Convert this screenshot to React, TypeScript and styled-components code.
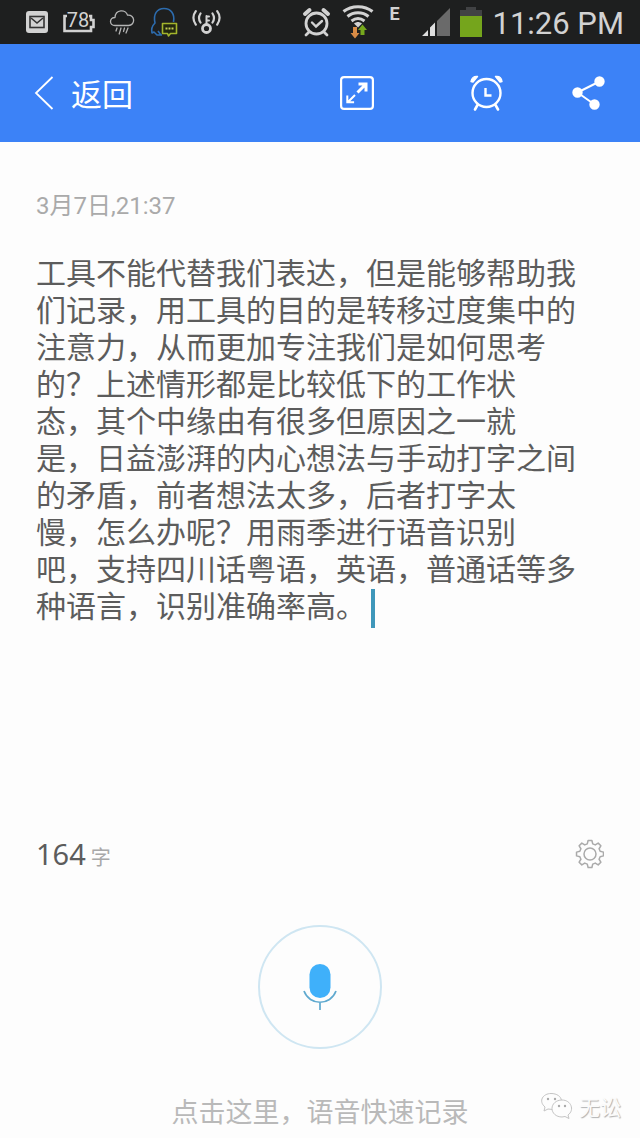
import React, { useState } from "react";
import styled, { createGlobalStyle } from "styled-components";

const latin = `Roboto, "Noto Sans CJK SC", sans-serif`;
const cjk = `"Noto Sans CJK SC", "Noto Sans", sans-serif`;

const GlobalStyle = createGlobalStyle`
  * { box-sizing: border-box; }
  body { margin: 0; background: #fdfdfd; font-family: ${cjk}; }
  button { padding: 0; border: 0; background: none; font: inherit; color: inherit; cursor: pointer; }
  svg { display: block; flex: none; }
`;

const Page = styled.div`
  position: relative;
  display: flex;
  flex-direction: column;
  min-height: 100vh;
`;

const StatusBar = styled.div`
  display: flex;
  justify-content: space-between;
  height: 44px;
  padding: 0 16px 0 26px;
  background: #1e1f1f;
  color: #d2d2d2;
`;

const StatusGroup = styled.div<{ $gap: number }>`
  display: flex;
  align-items: center;
  gap: ${(p) => p.$gap}px;
`;

const NetworkType = styled.span`
  width: 28px;
  padding: 0 8px 16px 5px;
  font: 700 18px/20px ${latin};
`;

const Clock = styled.span`
  font: 400 31px/44px ${latin};
  padding-top: 3px;
  white-space: nowrap;
`;

const Header = styled.header`
  display: flex;
  align-items: center;
  justify-content: space-between;
  height: 98px;
  padding: 0 34px;
  background: #3c82f7;
  color: #fff;
`;

const BackButton = styled.button`
  display: flex;
  align-items: center;
  gap: 16px;
  && {
    font: 400 31px/44px ${cjk};
  }
`;

const Actions = styled.div`
  display: flex;
  gap: 68px;
`;

const ActionButton = styled.button<{ $after?: number }>`
  margin-right: ${(p) => p.$after ?? 0}px;
`;

const Main = styled.main`
  display: flex;
  flex: 1;
  flex-direction: column;
  padding: 50px 36px 9px;
`;

const NoteDate = styled.time`
  color: #aaa;
  font: 400 24px/28px ${latin};
`;

const NoteField = styled.div`
  position: relative;
  display: flex;
  flex: 1;
  margin-top: 33px;
`;

const NoteText = styled.textarea`
  flex: 1;
  min-height: 380px;
  padding: 0;
  border: 0;
  outline: 0;
  resize: none;
  overflow: hidden;
  background: transparent;
  color: #5c5c5c;
  caret-color: #3f97ba;
  font: 400 30px/37px ${cjk};
`;

const Caret = styled.span`
  position: absolute;
  top: 336px;
  left: 335px;
  width: 4px;
  height: 39px;
  background: #3f97ba;
  pointer-events: none;
  ${NoteText}:focus + & {
    display: none;
  }
`;

const CountRow = styled.div`
  display: flex;
  align-items: center;
  justify-content: space-between;
  height: 36px;
`;

const Count = styled.p`
  margin: 0;
  color: #5c5c5c;
  font: 400 29px/36px "Noto Sans", "Noto Sans CJK SC", sans-serif;
`;

const CountUnit = styled.span`
  margin-left: 5px;
  color: #a8a8a8;
  font-size: 20px;
`;

const SettingsButton = styled.button`
  padding-bottom: 4px;
`;

const Recorder = styled.div`
  display: flex;
  flex-direction: column;
  align-items: center;
  gap: 44px;
  margin-top: 51px;
`;

const MicButton = styled.button`
  display: grid;
  place-items: center;
  width: 124px;
  height: 124px;
  && {
    border: 2px solid #cfe6f2;
  }
  border-radius: 50%;
`;

const Hint = styled.p`
  margin: 0;
  color: #b9b9b9;
  font: 400 27px/36px ${cjk};
`;

const Watermark = styled.div`
  position: absolute;
  right: 19px;
  bottom: 18px;
  display: flex;
  align-items: center;
  gap: 5px;
  color: #fbfbfb;
  font: 400 21px/28px ${cjk};
  text-shadow: 1px 1px 1px #b0b0b0;
`;

const MailIcon = () => (
  <svg width="22" height="22" viewBox="0 0 22 22" fill="none">
    <rect width="22" height="22" rx="3" fill="#d2d2d2" />
    <rect x="4" y="5.5" width="14" height="11" stroke="#333" strokeWidth="1.6" />
    <path d="m5 7 6 5 6-5" stroke="#333" strokeWidth="1.6" />
  </svg>
);

const BatteryLevelIcon = () => (
  <svg width="33" height="44" viewBox="0 0 33 44" fill="none">
    <path d="M5 16H2.500v15H29v-4h2.500v-7H29v-4h-2" stroke="#d2d2d2" strokeWidth="2.600" />
    <text x="16" y="27" fill="#d2d2d2" fontFamily="Roboto, sans-serif" fontSize="20" textAnchor="middle">78</text>
  </svg>
);

const RainIcon = () => (
  <svg width="26" height="26" viewBox="0 0 26 26" fill="none" stroke="#b4b4b4" strokeWidth="1.300" strokeLinecap="round" strokeLinejoin="round">
    <path d="M6 16.500c-6 0-6-8 0-8C6.500 0 17 0 18.500 6.200c8-.8 8 10.300 1 10.300Z" />
    <path d="m8 19-1 3M12 19l-1.800 6M15.500 19l-1 3.500M19 19l-2 5" />
  </svg>
);

const QqIcon = () => (
  <svg width="29" height="30" viewBox="0 0 29 30" fill="none" strokeLinejoin="round">
    <path d="M13 28H8l-3-3-2 1c-1-4 0-7 3-10C4 7 8 1.500 15 1.500S26 7 24.500 15M9 24l3 4" stroke="#2d6cae" strokeWidth="1.600" />
    <path d="M13.500 16.500h14v10h-6l-2 2.500-1-2.500h-5Z" fill="#23280f" stroke="#a3b52c" strokeWidth="1.600" />
    <path d="M16.500 21.500h2M19.500 21.500h2M22.500 21.500h2" stroke="#c3ce55" strokeWidth="1.800" />
  </svg>
);

const BroadcastIcon = () => (
  <svg width="29" height="26" viewBox="0 0 29 26" fill="none" stroke="#d2d2d2" strokeWidth="2.200" strokeLinecap="round">
    <circle cx="14.500" cy="19.500" r="4" strokeWidth="2.800" />
    <path d="M14.500 15V7M14.500 7.500H17M14.500 11.500H17" strokeWidth="2" />
    <path d="M8.500 4.500c-2 3-2 6 0 9M3.800 2.200c-3 4-3 9 0 13.500M20.500 4.500c2 3 2 6 0 9M25.200 2.200c3 4 3 9 0 13.500" />
  </svg>
);

const StatusAlarmIcon = () => (
  <svg width="30" height="30" viewBox="0 0 30 30" fill="none" stroke="#d2d2d2" strokeLinecap="round">
    <circle cx="14.500" cy="16.500" r="10.500" strokeWidth="2.800" />
    <path d="m10 15.500 4 4 6-5.500" strokeWidth="2.400" />
    <path d="M3 7 7.500 3M26 7 21.500 3" strokeWidth="4" />
    <path d="m7 25-3 3M22 25l3 3" strokeWidth="2.800" />
  </svg>
);

const WifiIcon = () => (
  <svg width="32" height="34" viewBox="0 0 32 34" fill="none">
    <path d="M1.500 6.500c8-6.500 21-6.500 29 0M5.500 11.500c6-5 15-5 21 0M9.500 16c4-3 9-3 13 0" stroke="#d2d2d2" strokeWidth="3" />
    <path d="m12 18.500 4 4 4-4c-3-2-5-2-8 0Z" fill="#d2d2d2" />
    <path d="M11 22h4v6h2.500L13 33.500 8.500 28H11Z" fill="#d98b45" />
    <path d="M18.500 30h4v-5H25l-4.500-5.500L16 25h2.500Z" fill="#76a81d" />
  </svg>
);

const SignalIcon = () => (
  <svg width="28" height="28" viewBox="0 0 28 28">
    <path d="M0 28 6 22v6ZM8 28v-8.500l5-5V28Z" fill="#dedede" />
    <path d="M15 28V13L28 0v28Z" fill="#6a6a6a" />
  </svg>
);

const BatteryIcon = () => (
  <svg width="22" height="32" viewBox="0 0 22 32">
    <path d="M0 11V4h6V1h10v3h6v7Z" fill="#414244" />
    <path d="M0 10h22v21H0Z" fill="#75a51c" />
  </svg>
);

const ChevronIcon = () => (
  <svg width="21" height="34" viewBox="0 0 21 34" fill="none" stroke="#fff" strokeWidth="1.800">
    <path d="M18.500 1 2 17l16.500 16" />
  </svg>
);

const ExpandIcon = () => (
  <svg width="34" height="34" viewBox="0 0 34 34" fill="none" stroke="#fff">
    <rect x="1.100" y="1.100" width="31.800" height="31.800" rx="3" strokeWidth="2.200" />
    <path d="m17.500 16.500 8-8M18.500 8h7.500v7.500" strokeWidth="3" />
    <path d="m15 19-7 7M7.300 19.500v6.800h6.800" strokeWidth="2" />
  </svg>
);

const AlarmIcon = () => (
  <svg width="34" height="36" viewBox="0 0 34 36" fill="none" stroke="#fff" strokeLinecap="round">
    <circle cx="16.500" cy="18" r="14" strokeWidth="2.400" />
    <path d="M15.500 13v7.500h6" strokeWidth="2.400" strokeLinecap="butt" />
    <path d="M1 6.500C1.500 3 4 1 7.500 1.500L3 7ZM32 6.500C31.500 3 29 1 25.500 1.500L30 7Z" fill="#fff" strokeWidth="1.400" strokeLinejoin="round" />
    <path d="m7.500 30-2.500 4.500M25.500 30l2.500 4.500" strokeWidth="2.600" />
  </svg>
);

const ShareIcon = () => (
  <svg width="34" height="36" viewBox="0 0 34 36" fill="#fff" stroke="#fff" strokeWidth="2">
    <path d="M27.500 6.500 5.500 17.500l17 12" fill="none" />
    <circle cx="27.500" cy="6.500" r="4.200" />
    <circle cx="5.500" cy="17.500" r="4.200" />
    <circle cx="22.500" cy="29.500" r="4.200" />
  </svg>
);

// Eight teeth, each with an outer flat and an inner valley.
const gearPoints = Array.from({ length: 8 }, (_, i) =>
  [[-15, 10.5], [-8, 13.6], [8, 13.6], [15, 10.5]].map(([offset, r]) => {
    const a = ((i * 45 + offset) * Math.PI) / 180;
    return `${(16 + r * Math.sin(a)).toFixed(2)},${(15 - r * Math.cos(a)).toFixed(2)}`;
  }).join(" ")
).join(" ");

const GearIcon = () => (
  <svg width="30" height="30" viewBox="0 0 30 30" fill="none" stroke="#aaa" strokeWidth="1.500" strokeLinejoin="round">
    <polygon points={gearPoints} />
    <circle cx="16" cy="15" r="6" />
  </svg>
);

const MicIcon = () => (
  <svg width="34" height="48" viewBox="0 0 34 48" fill="none">
    <rect x="6.500" y="1" width="21" height="34" rx="10.500" fill="#3fb0fa" />
    <path d="M1 28c5.500 15 26.500 15 32 0M17 39.500V47" stroke="#5fa9cf" strokeWidth="1.700" />
  </svg>
);

const WechatIcon = () => (
  <svg width="34" height="28" viewBox="0 0 34 28" fill="#fdfdfd" stroke="#c4c4c4" strokeWidth="1">
    <path d="M13 17.500 8 17l-4 2 1-4C-2 9 3 1.500 11 1.500c6 0 10 3 10.500 7" />
    <path d="M22 8c-6 0-10 4-10 8.500S16 25 22 25l3-.5 4 2-1-3.500c7-5 3-15-6-15Z" />
    <g fill="#aaa" stroke="none">
      <circle cx="8" cy="7" r="1.200" />
      <circle cx="15" cy="7" r="1.200" />
      <circle cx="19" cy="14" r="1.200" />
      <circle cx="25" cy="14" r="1.200" />
    </g>
  </svg>
);

const initialNote = [
  "工具不能代替我们表达，但是能够帮助我",
  "们记录，用工具的目的是转移过度集中的",
  "注意力，从而更加专注我们是如何思考",
  "的？上述情形都是比较低下的工作状",
  "态，其个中缘由有很多但原因之一就",
  "是，日益澎湃的内心想法与手动打字之间",
  "的矛盾，前者想法太多，后者打字太",
  "慢，怎么办呢？用雨季进行语音识别",
  "吧，支持四川话粤语，英语，普通话等多",
  "种语言，识别准确率高。",
].join("\n");

export default function App() {
  const [note, setNote] = useState(initialNote);

  return (
    <Page lang="zh-CN">
      <GlobalStyle />
      <StatusBar>
        <StatusGroup $gap={14}>
          <MailIcon />
          <BatteryLevelIcon />
          <RainIcon />
          <QqIcon />
          <BroadcastIcon />
        </StatusGroup>
        <StatusGroup $gap={10}>
          <StatusAlarmIcon />
          <WifiIcon />
          <NetworkType>E</NetworkType>
          <SignalIcon />
          <BatteryIcon />
          <Clock>11:26 PM</Clock>
        </StatusGroup>
      </StatusBar>
      <Header>
        <BackButton type="button">
          <ChevronIcon />
          返回
        </BackButton>
        <Actions>
          <ActionButton type="button" aria-label="全屏" $after={28}>
            <ExpandIcon />
          </ActionButton>
          <ActionButton type="button" aria-label="提醒">
            <AlarmIcon />
          </ActionButton>
          <ActionButton type="button" aria-label="分享">
            <ShareIcon />
          </ActionButton>
        </Actions>
      </Header>
      <Main>
        <NoteDate>3月7日,21:37</NoteDate>
        <NoteField>
          <NoteText
            aria-label="笔记内容"
            spellCheck={false}
            value={note}
            onChange={(e) => setNote(e.target.value)}
          />
          {note === initialNote && <Caret />}
        </NoteField>
        <CountRow>
          <Count>
            164<CountUnit>字</CountUnit>
          </Count>
          <SettingsButton type="button" aria-label="设置">
            <GearIcon />
          </SettingsButton>
        </CountRow>
        <Recorder>
          <MicButton type="button" aria-label="语音记录">
            <MicIcon />
          </MicButton>
          <Hint>点击这里，语音快速记录</Hint>
        </Recorder>
      </Main>
      <Watermark>
        <WechatIcon />
        无讼
      </Watermark>
    </Page>
  );
}
